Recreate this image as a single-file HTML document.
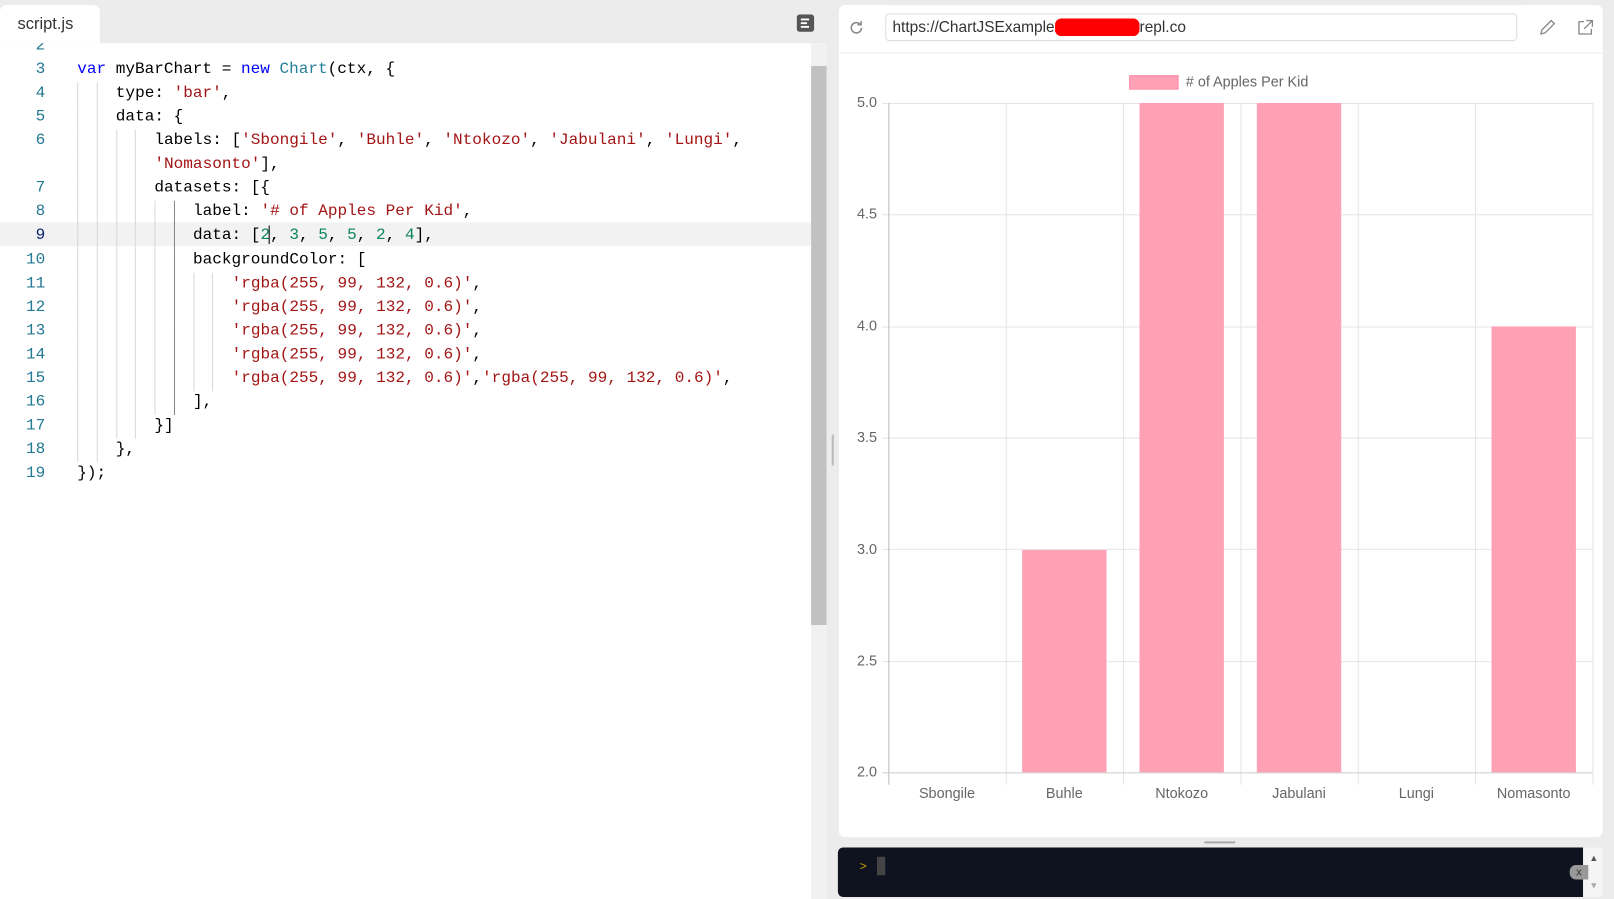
<!DOCTYPE html>
<html><head><meta charset="utf-8"><style>
html,body{margin:0;padding:0;width:1614px;height:899px;overflow:hidden;background:#ececec}
#w{position:absolute;left:0;top:0;width:1568px;height:873px;transform:scale(1.02934,1.0298);transform-origin:0 0;font-family:"Liberation Sans",sans-serif}
.abs{position:absolute}
.tab{left:0;top:5px;width:97px;height:37px;background:#fff;border-radius:6px 6px 0 0;font-size:16px;color:#333;line-height:37px;padding-left:17px;box-sizing:border-box}
.ed{left:0;top:42px;width:803px;height:831px;background:#fff;overflow:hidden}
.ln{position:absolute;left:0;width:44px;text-align:right;color:#237893;font-family:"Liberation Mono",monospace;font-size:15.6px}
.cd{position:absolute;left:75px;white-space:pre;font-family:"Liberation Mono",monospace;font-size:15.6px;color:#000}
.k{color:#0000ff}.s{color:#a31515}.n{color:#098658}.t{color:#267f99}
.g{position:absolute;width:1px;background:#d8d8d8}
.card{left:815px;top:5px;width:742px;height:808px;background:#fff;border-radius:6px}
.yl{position:absolute;right:716px;font-size:14px;color:#666;width:40px;text-align:right}
.xl{position:absolute;top:762px;width:114px;text-align:center;font-size:14px;color:#666}
</style></head><body><div id="w">
<div class="abs tab">script.js</div>
<svg class="abs" style="left:774px;top:14px" width="17" height="17"><rect x="0" y="0" width="17" height="17" rx="3" fill="#555"/><rect x="4" y="4" width="8" height="1.8" fill="#fff"/><rect x="4" y="7.6" width="6" height="1.8" fill="#fff"/><rect x="4" y="11.2" width="8" height="1.8" fill="#fff"/></svg>
<div class="abs ed">
<div class="abs" style="left:0;top:174px;width:788px;height:23px;background:#f2f2f2"></div>
<div class="abs" style="left:788px;top:22px;width:15px;height:543px;background:#c1c1c1"></div>
<div class="abs" style="left:788px;top:0;width:15px;height:22px;background:#f1f1f1"></div>
<div class="abs" style="left:788px;top:565px;width:15px;height:266px;background:#f1f1f1"></div>
</div>
<div class="abs" style="left:0;top:42px;width:788px;height:831px;overflow:hidden">
<div id="lines"></div>
</div>
<div class="abs" style="left:803px;top:42px;width:12px;height:831px;background:#ececec"></div>
<div class="abs" style="left:808px;top:422px;width:2px;height:30px;background:#bbb"></div>

<div class="abs card"></div>
<svg class="abs" style="left:823px;top:18px" width="18" height="18" viewBox="0 0 18 18"><path d="M14 9a5 5 0 1 1-1.5-3.6" fill="none" stroke="#888" stroke-width="1.5"/><path d="M13.5 2.5v3.5h-3.5" fill="none" stroke="#888" stroke-width="1.5"/></svg>
<div class="abs" style="left:860px;top:13px;width:614px;height:27px;border:1px solid #ddd;border-radius:4px;box-sizing:border-box;font-size:15px;color:#333;line-height:26px;padding-left:6px">https://ChartJSExample<span style="color:#f00;background:#f00;border-radius:6px">xxxxxxxxxxx</span>repl.co</div>
<svg class="abs" style="left:1494px;top:18px" width="18" height="18"><path d="M3 15l1-4 9-9 3 3-9 9z" fill="none" stroke="#888" stroke-width="1.3"/></svg>
<svg class="abs" style="left:1532px;top:19px" width="16" height="16"><path d="M7 2H2v12h12V9" fill="none" stroke="#888" stroke-width="1.3"/><path d="M9 1h6v6M15 1L7 9" fill="none" stroke="#888" stroke-width="1.3"/></svg>
<div class="abs" style="left:815px;top:51px;width:742px;height:1px;background:#eee"></div>

<div class="abs" style="left:1097px;top:73px;width:48px;height:14px;background:#ffa1b5;border:1px solid #ff8fa8;box-sizing:border-box"></div>
<div class="abs" style="left:1152px;top:71px;font-size:14px;color:#666">#&nbsp;of Apples Per Kid</div>
<svg class="abs" style="left:0;top:0" width="1568" height="873">
<g stroke="#e5e5e5" stroke-width="1">
<line x1="857" y1="100.5" x2="1547" y2="100.5"/><line x1="857" y1="208.5" x2="1547" y2="208.5"/><line x1="857" y1="317.5" x2="1547" y2="317.5"/><line x1="857" y1="425.5" x2="1547" y2="425.5"/><line x1="857" y1="533.5" x2="1547" y2="533.5"/><line x1="857" y1="642.5" x2="1547" y2="642.5"/>
<line x1="977.5" y1="100" x2="977.5" y2="762"/><line x1="1091.5" y1="100" x2="1091.5" y2="762"/><line x1="1205.5" y1="100" x2="1205.5" y2="762"/><line x1="1319.5" y1="100" x2="1319.5" y2="762"/><line x1="1433.5" y1="100" x2="1433.5" y2="762"/><line x1="1547.5" y1="100" x2="1547.5" y2="762"/>
</g>
<g fill="#ffa1b5">
<rect x="993" y="534" width="82" height="216"/><rect x="1107" y="100" width="82" height="650"/><rect x="1221" y="100" width="82" height="650"/><rect x="1449" y="317" width="82" height="433"/>
</g>
<line x1="863.5" y1="100" x2="863.5" y2="762" stroke="#bbb"/>
<line x1="857" y1="750.5" x2="1547" y2="750.5" stroke="#ccc"/>
</svg>
<div class="yl" style="top:91px;left:812px">5.0</div>
<div class="yl" style="top:199px;left:812px">4.5</div>
<div class="yl" style="top:308px;left:812px">4.0</div>
<div class="yl" style="top:416px;left:812px">3.5</div>
<div class="yl" style="top:525px;left:812px">3.0</div>
<div class="yl" style="top:633px;left:812px">2.5</div>
<div class="yl" style="top:741px;left:812px">2.0</div>
<div class="xl" style="left:863px">Sbongile</div>
<div class="xl" style="left:977px">Buhle</div>
<div class="xl" style="left:1091px">Ntokozo</div>
<div class="xl" style="left:1205px">Jabulani</div>
<div class="xl" style="left:1319px">Lungi</div>
<div class="xl" style="left:1433px">Nomasonto</div>

<div class="abs" style="left:1170px;top:817px;width:30px;height:2px;background:#aaa"></div>
<div class="abs" style="left:814px;top:823px;width:724px;height:48px;background:#0f1320;border-radius:5px 0 0 5px"></div>
<div class="abs" style="left:1538px;top:823px;width:19px;height:48px;background:#f5f5f5"></div>
<div class="abs" style="left:835px;top:835px;color:#c8a000;font-size:12px;font-family:'Liberation Mono',monospace">&gt;</div>
<div class="abs" style="left:852px;top:832px;width:8px;height:18px;background:#444"></div>
<div class="abs" style="left:1525px;top:840px;width:18px;height:14px;background:#999;border-radius:6px 0 0 6px;font-size:11px;color:#333;text-align:center;line-height:14px">x</div>
<div class="abs" style="left:1544px;top:828px;font-size:9px;color:#555">▲</div>
<div class="abs" style="left:1544px;top:855px;font-size:9px;color:#aaa">▼</div>
</div>
<script>
var L=[["2","",0],["3",'<span class="k">var</span> myBarChart = <span class="k">new</span> <span class="t">Chart</span>(ctx, {',0],["4","type: <span class=\"s\">'bar'</span>,",1],["5","data: {",1],["6","labels: [<span class=\"s\">'Sbongile'</span>, <span class=\"s\">'Buhle'</span>, <span class=\"s\">'Ntokozo'</span>, <span class=\"s\">'Jabulani'</span>, <span class=\"s\">'Lungi'</span>,",2],["","<span class=\"s\">'Nomasonto'</span>],",2],["7","datasets: [{",2],["8","label: <span class=\"s\">'# of Apples Per Kid'</span>,",3],["9","data: [<span class=\"n\">2</span><span style=\"border-left:1.5px solid #000;margin-left:-1px\"></span>, <span class=\"n\">3</span>, <span class=\"n\">5</span>, <span class=\"n\">5</span>, <span class=\"n\">2</span>, <span class=\"n\">4</span>],",3],["10","backgroundColor: [",3]];
for(var i=0;i<5;i++)L.push([String(11+i),"<span class=\"s\">'rgba(255, 99, 132, 0.6)'</span>,"+(i==4?"<span class=\"s\">'rgba(255, 99, 132, 0.6)'</span>,":""),4]);
L.push(["16","],",3],["17","}]",2],["18","},",1],["19","});",0]);
var h="",W=37.5;
for(var r=0;r<L.length;r++){var y=3+r*23.06;var l=L[r];
h+='<div class="ln" style="top:'+(y-10)+'px;'+(l[0]=="9"?'color:#0b216f;':'')+'">'+l[0]+'</div>';
var d=l[2];h+='<div class="cd" style="left:'+(75+d*W)+'px;top:'+(y-10)+'px">'+l[1]+'</div>';
for(var j=0;j<2*d;j++)h+='<div class="g" style="left:'+(75+j*18.75)+'px;top:'+(y-11)+'px;height:23.1px;'+(j==5&&r>=7&&r<=16?'background:#888;':'')+'"></div>';}
document.getElementById("lines").innerHTML=h;
</script>
</body></html>
